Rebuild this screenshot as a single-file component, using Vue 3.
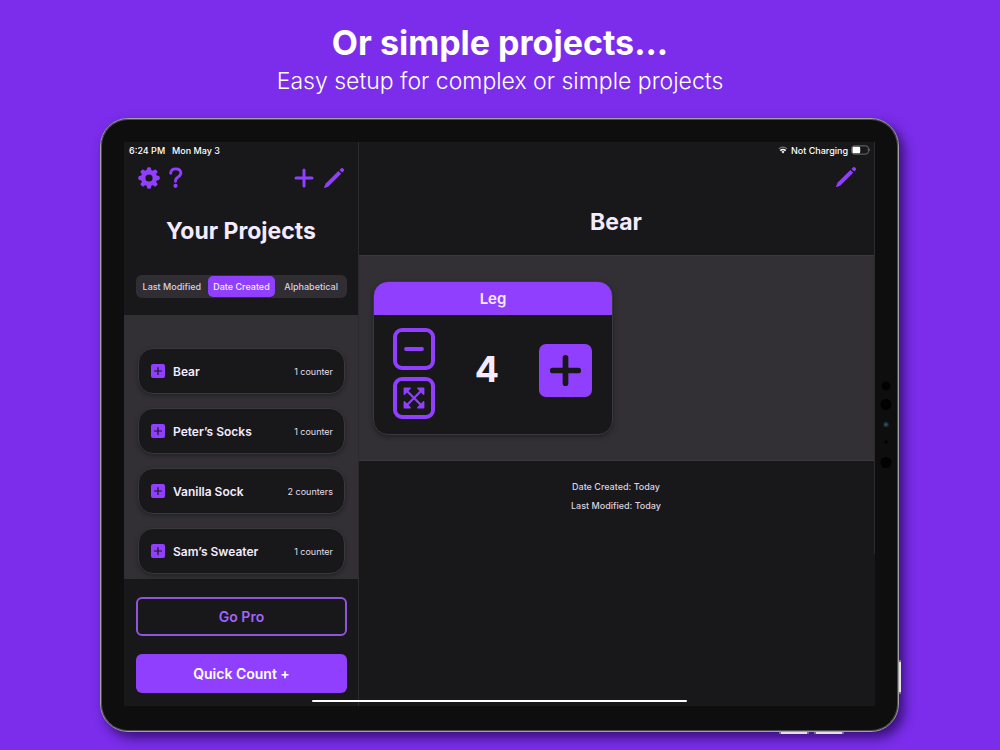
<script setup>
import { ref } from 'vue'

const sorts = ['Last Modified', 'Date Created', 'Alphabetical']
const sort = ref('Date Created')

const projects = [
  { name: 'Bear', count: '1 counter' },
  { name: 'Peter’s Socks', count: '1 counter' },
  { name: 'Vanilla Sock', count: '2 counters' },
  { name: 'Sam’s Sweater', count: '1 counter' },
]

const total = ref(4)
const gearTeeth = [0, 45, 90, 135, 180, 225, 270, 315]
</script>

<template>
  <div class="page">
    <header class="intro">
      <h1>Or simple projects...</h1>
      <p>Easy setup for complex or simple projects</p>
    </header>

    <div class="device">
      <span class="key side"></span>
      <span class="key under first"></span>
      <span class="key under second"></span>
      <svg class="sensors" width="14" height="90" viewBox="0 0 14 90" aria-hidden="true">
        <circle cx="7" cy="6" r="4.5" fill="#020202" />
        <circle cx="7" cy="24.500" r="5.500" fill="#020202" />
        <circle cx="7" cy="44.500" r="3" fill="#202326" />
        <circle cx="7" cy="44.500" r="1.500" fill="#145b80" />
        <circle cx="7" cy="62" r="1.800" fill="#020202" />
        <circle cx="7" cy="82.500" r="5.500" fill="#020202" />
      </svg>

      <div class="screen">
        <aside class="sidebar">
          <div class="status">
            <span>6:24 PM</span>
            <span>Mon May 3</span>
          </div>
          <div class="tools">
            <button class="icon" type="button" aria-label="Settings">
              <svg width="22" height="22" viewBox="0 0 22 22">
                <rect
                  v-for="a in gearTeeth"
                  :key="a"
                  x="8.800"
                  y="0.300"
                  width="4.400"
                  height="6"
                  rx="1.600"
                  fill="currentColor"
                  :transform="`rotate(${a} 11 11)`"
                />
                <circle cx="11" cy="11" r="5.900" fill="none" stroke="currentColor" stroke-width="4.600" />
              </svg>
            </button>
            <button class="icon" type="button" aria-label="Help">
              <svg width="14" height="22" viewBox="0 0 14 22" fill="none">
                <path
                  d="M1.700 6.300C1.700 3.300 3.900 1.900 6.700 1.900c3 0 5.100 1.600 5.100 4.200 0 2-1.100 3-2.700 4C7.300 11.200 6.500 12 6.500 13.800v.4"
                  stroke="currentColor"
                  stroke-width="2.900"
                  stroke-linecap="round"
                />
                <circle cx="6.500" cy="18.800" r="2.100" fill="currentColor" />
              </svg>
            </button>
            <span class="spacer"></span>
            <button class="icon" type="button" aria-label="Add project">
              <svg width="20" height="20" viewBox="0 0 20 20">
                <path d="M10 2v16M2 10h16" stroke="currentColor" stroke-width="3" stroke-linecap="round" />
              </svg>
            </button>
            <button class="icon" type="button" aria-label="Edit projects">
              <svg width="22" height="22" viewBox="0 0 22 22" fill="currentColor">
                <path d="M15.400 3.900l2.800 2.800L5.400 19.400l-3.600 1.500c-.6.200-.9-.1-.7-.7l1.600-3.600z" />
                <path d="M16.500 2.900l1.400-1.400c.7-.7 1.600-.7 2.300 0l.4.4c.7.7.7 1.600 0 2.300l-1.400 1.400z" />
              </svg>
            </button>
          </div>
          <h2>Your Projects</h2>
          <div class="sorts" role="radiogroup" aria-label="Sort projects">
            <label v-for="s in sorts" :key="s" :class="{ on: sort === s }">
              <input v-model="sort" type="radio" name="sort" :value="s" />
              <span>{{ s }}</span>
            </label>
          </div>

          <ul class="projects">
            <li v-for="p in projects" :key="p.name">
              <button class="mini" type="button" :aria-label="`Open ${p.name}`">
                <svg width="14" height="14" viewBox="0 0 14 14">
                  <path d="M7 3.500v7M3.500 7h7" stroke="#18181a" stroke-width="1.200" stroke-linecap="round" />
                </svg>
              </button>
              <strong>{{ p.name }}</strong>
              <small>{{ p.count }}</small>
            </li>
          </ul>

          <div class="actions">
            <button class="pro" type="button">Go Pro</button>
            <button class="quick" type="button">Quick Count +</button>
          </div>
        </aside>

        <main class="detail">
          <div class="status end">
            <svg width="10" height="8" viewBox="0 0 10 8" fill="none" aria-hidden="true">
              <path d="M1 2.800a5.800 5.800 0 0 1 8 0" stroke="#777" stroke-width="1.200" />
              <path d="M2.300 4.600a3.900 3.900 0 0 1 5.400 0" stroke="#fff" stroke-width="1.600" />
              <path d="M3.500 5.800a2.200 2.200 0 0 1 3 0L5 7.600z" fill="#fff" />
            </svg>
            <span>Not Charging</span>
            <svg width="20" height="10" viewBox="0 0 20 10" aria-hidden="true">
              <rect x="0.700" y="0.900" width="16.600" height="8.200" rx="2.400" fill="none" stroke="#6d6d70" />
              <rect x="1.500" y="1.800" width="7.700" height="6.400" rx="1.200" fill="#fff" />
              <path d="M18.300 3.600c1.200.4 1.200 2.400 0 2.800z" fill="#6d6d70" />
            </svg>
          </div>
          <div class="tools end">
            <button class="icon" type="button" aria-label="Edit project">
              <svg width="22" height="22" viewBox="0 0 22 22" fill="currentColor">
                <path d="M15.400 3.900l2.800 2.800L5.400 19.400l-3.600 1.500c-.6.200-.9-.1-.7-.7l1.600-3.600z" />
                <path d="M16.500 2.900l1.400-1.400c.7-.7 1.600-.7 2.300 0l.4.4c.7.7.7 1.600 0 2.300l-1.400 1.400z" />
              </svg>
            </button>
          </div>
          <h2>Bear</h2>

          <section class="counters">
            <article class="counter">
              <h3>Leg</h3>
              <div class="controls">
                <div class="stack">
                  <button class="outline" type="button" aria-label="Subtract one" @click="total--">
                    <svg width="32" height="32" viewBox="0 0 32 32">
                      <path d="M8 16h16" stroke="currentColor" stroke-width="3.800" stroke-linecap="round" />
                    </svg>
                  </button>
                  <button class="outline" type="button" aria-label="Full screen">
                    <svg width="32" height="32" viewBox="0 0 32 32" fill="currentColor" stroke="currentColor" stroke-linejoin="round">
                      <path d="M8 8l16 16M24 8L8 24" stroke-width="2.200" />
                      <path d="M6.300 6.300h5.900l-5.900 5.900zM25.700 6.300v5.900l-5.900-5.900zM6.300 25.700v-5.900l5.900 5.900zM25.700 25.700h-5.900l5.900-5.900z" stroke-width="1.400" />
                    </svg>
                  </button>
                </div>
                <output>{{ total }}</output>
                <button class="plus" type="button" aria-label="Add one" @click="total++">
                  <svg width="53" height="53" viewBox="0 0 52 52">
                    <path d="M26 13.500v25M13.500 26h25" stroke="#18181a" stroke-width="5.600" stroke-linecap="round" />
                  </svg>
                </button>
              </div>
            </article>
          </section>

          <div class="dates">
            <p>Date Created: Today</p>
            <p>Last Modified: Today</p>
          </div>
          <span class="scrollbar"></span>
        </main>
        <span class="home"></span>
      </div>
    </div>
  </div>
</template>

<style>
body {
  background: #7b2deb;
}
</style>

<style scoped>
* {
  box-sizing: border-box;
  margin: 0;
}
.page {
  display: flex;
  flex-direction: column;
  min-height: 100vh;
  padding: 21px 10% 18px;
  background: #7b2deb;
  color: #f3ebff;
  font-family: Inter, "Liberation Sans", sans-serif;
}
button {
  padding: 0;
  border: 0;
  background: none;
  color: inherit;
  font: inherit;
  cursor: pointer;
}
svg {
  display: block;
}
.intro {
  margin-bottom: 21px;
  color: #fff;
  text-align: center;
}
.intro h1 {
  font-size: 34px;
  font-weight: 700;
  line-height: 44px;
}
.intro p {
  font-size: 23px;
  font-weight: 300;
  line-height: 32px;
}
.device {
  position: relative;
  display: flex;
  flex: 1;
  padding: 23px 23px 25px;
  border: 1px solid #a09fa4;
  border-radius: 28px;
  margin-right: 1px;
  background: #0e0e0e;
  box-shadow: inset 0 0 0 1px #4c4b4f, 5px 6px 12px rgba(20, 0, 60, 0.65);
}
.key {
  position: absolute;
  border: 0 solid #77757c;
  background: #e3e1e6;
}
.key.side {
  right: -3px;
  bottom: 37px;
  width: 2px;
  height: 34px;
  border-width: 2px 0;
}
.key.under {
  bottom: -3px;
  width: 30px;
  height: 2px;
  border-width: 0 2px;
}
.key.first {
  right: 89px;
}
.key.second {
  right: 54px;
}
.sensors {
  position: absolute;
  top: 261px;
  right: 5px;
}
.screen {
  position: relative;
  display: flex;
  flex: 1;
  min-width: 0;
  background: #18181a;
}
.sidebar {
  display: flex;
  flex: 0 0 235px;
  flex-direction: column;
  border-right: 1px solid #2b2a2e;
}
.detail {
  position: relative;
  flex: 1;
  min-width: 0;
}
.status {
  display: flex;
  align-items: center;
  gap: 7px;
  height: 16px;
  padding-left: 5px;
  color: #fff;
  font-size: 9px;
  font-weight: 500;
  white-space: nowrap;
}
.status.end {
  justify-content: flex-end;
  gap: 3px;
  padding-right: 4px;
}
.tools {
  display: flex;
  align-items: center;
  gap: 9px;
  height: 40px;
  padding: 0 13px 0 14px;
  color: #913fff;
}
.tools.end {
  justify-content: flex-end;
  height: 38px;
  padding-right: 18px;
}
.spacer {
  flex: 1;
}
h2 {
  height: 32px;
  color: #f3ebff;
  font-size: 23px;
  font-weight: 700;
  line-height: 32px;
  text-align: center;
}
.sidebar h2 {
  margin: 17px 0 28px;
}
.detail h2 {
  margin: 10px 2px 17px 0;
}
.sorts {
  display: grid;
  grid-template-columns: repeat(3, 1fr);
  height: 23px;
  margin: 0 11px 17px 12px;
  padding: 1px;
  border-radius: 6px;
  background: #302e33;
}
.sorts label {
  position: relative;
  display: flex;
  align-items: center;
  justify-content: center;
  margin: 0 1px;
  border-radius: 5px;
  color: #d8d2e0;
  font-size: 9px;
  font-weight: 500;
  white-space: nowrap;
  cursor: pointer;
}
.sorts .on {
  background: #913fff;
  color: #f3ebff;
}
.sorts input {
  position: absolute;
  opacity: 0;
}
.projects {
  display: flex;
  flex: 1;
  flex-direction: column;
  gap: 14px;
  padding: 33px 13px 5px 14px;
  background: #323035;
  list-style: none;
}
.projects li {
  display: flex;
  align-items: center;
  gap: 8px;
  height: 46px;
  padding: 0 11px 0 12px;
  border: 1px solid #39383c;
  border-radius: 15px;
  background: #18181a;
  box-shadow: 0 2px 4px rgba(0, 0, 0, 0.3);
}
.mini {
  border-radius: 2px;
  background: #913fff;
}
.projects strong {
  flex: 1;
  font-size: 12px;
  font-weight: 600;
}
.projects small {
  color: #e4dfea;
  font-size: 9px;
  font-weight: 400;
}
.actions {
  display: flex;
  flex-direction: column;
  gap: 18px;
  padding: 18px 11px 13px 12px;
}
.actions button {
  height: 39px;
  border-radius: 6px;
  font-size: 14px;
  font-weight: 600;
}
.actions .pro {
  border: 2px solid #8d55d8;
  color: #a463fa;
}
.actions .quick {
  background: #913fff;
  color: #fff;
}
.counters {
  padding: 25px 14px;
  border-top: 1px solid #39383c;
  border-bottom: 1px solid #39383c;
  background: #323035;
}
.counter {
  overflow: hidden;
  width: 240px;
  border: 1px solid #39383c;
  border-radius: 15px;
  background: #18181a;
  box-shadow: 0 2px 5px rgba(0, 0, 0, 0.35);
}
.counter h3 {
  background: #913fff;
  font-size: 15px;
  font-weight: 600;
  line-height: 33px;
  text-align: center;
}
.controls {
  display: flex;
  align-items: center;
  justify-content: space-between;
  padding: 13px 20px 15px 19px;
}
.stack {
  display: grid;
  gap: 7px;
}
.outline {
  display: grid;
  place-content: center;
  width: 42px;
  height: 42px;
  border: 4px solid #913fff;
  border-radius: 9px;
  color: #913fff;
}
.controls output {
  margin-bottom: 9px;
  font-size: 36px;
  font-weight: 700;
}
.plus {
  margin-bottom: 7px;
  border-radius: 7px;
  background: #913fff;
}
.dates {
  padding: 16px 2px 0 0;
  color: #d8d2e0;
  font-size: 9px;
  font-weight: 500;
  line-height: 19px;
  text-align: center;
}
.scrollbar {
  position: absolute;
  top: 0;
  right: 0;
  width: 1px;
  height: 412px;
  background: #2b2a2e;
}
.home {
  position: absolute;
  right: 25%;
  bottom: 4px;
  left: 25%;
  height: 2px;
  border-radius: 1px;
  background: #fff;
}
</style>
